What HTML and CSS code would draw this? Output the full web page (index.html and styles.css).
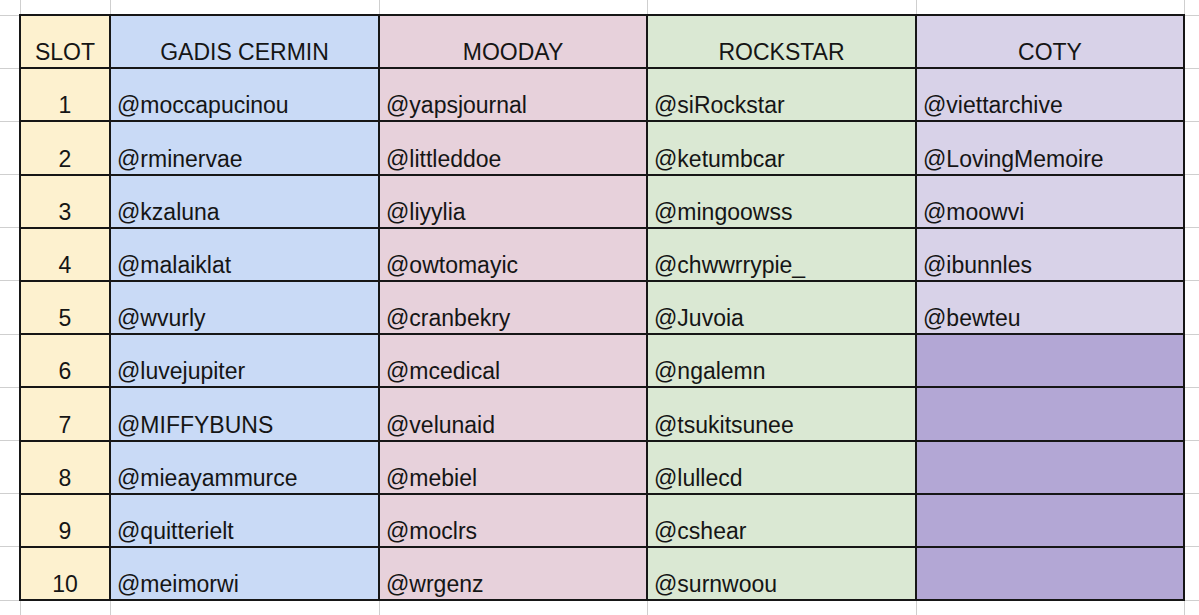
FILE: index.html
```html
<!DOCTYPE html>
<html lang="id">
<head>
<meta charset="utf-8">
<title>Slot</title>
<link rel="stylesheet" href="styles.css">
</head>
<body>
<table class="sheet">
  <colgroup>
    <col class="c-gut"><col class="c-slot"><col class="c-w1"><col class="c-w2"><col class="c-w3"><col class="c-w4"><col class="c-end">
  </colgroup>
  <tr class="r-edge"><td class="g"></td><td class="g"></td><td class="g"></td><td class="g"></td><td class="g"></td><td class="g"></td><td class="g"></td></tr>
  <tr class="r"><td class="g"></td><td class="d slot ctr">SLOT</td><td class="d blue ctr">GADIS CERMIN</td><td class="d pink ctr">MOODAY</td><td class="d green ctr">ROCKSTAR</td><td class="d lav ctr">COTY</td><td class="g"></td></tr>
  <tr class="r"><td class="g"></td><td class="d slot ctr">1</td><td class="d blue">@moccapucinou</td><td class="d pink">@yapsjournal</td><td class="d green">@siRockstar</td><td class="d lav">@viettarchive</td><td class="g"></td></tr>
  <tr class="r"><td class="g"></td><td class="d slot ctr">2</td><td class="d blue">@rminervae</td><td class="d pink">@littleddoe</td><td class="d green">@ketumbcar</td><td class="d lav">@LovingMemoire</td><td class="g"></td></tr>
  <tr class="r"><td class="g"></td><td class="d slot ctr">3</td><td class="d blue">@kzaluna</td><td class="d pink">@liyylia</td><td class="d green">@mingoowss</td><td class="d lav">@moowvi</td><td class="g"></td></tr>
  <tr class="r"><td class="g"></td><td class="d slot ctr">4</td><td class="d blue">@malaiklat</td><td class="d pink">@owtomayic</td><td class="d green">@chwwrrypie_</td><td class="d lav">@ibunnles</td><td class="g"></td></tr>
  <tr class="r"><td class="g"></td><td class="d slot ctr">5</td><td class="d blue">@wvurly</td><td class="d pink">@cranbekry</td><td class="d green">@Juvoia</td><td class="d lav">@bewteu</td><td class="g"></td></tr>
  <tr class="r"><td class="g"></td><td class="d slot ctr">6</td><td class="d blue">@luvejupiter</td><td class="d pink">@mcedical</td><td class="d green">@ngalemn</td><td class="d purple"></td><td class="g"></td></tr>
  <tr class="r"><td class="g"></td><td class="d slot ctr">7</td><td class="d blue">@MIFFYBUNS</td><td class="d pink">@velunaid</td><td class="d green">@tsukitsunee</td><td class="d purple"></td><td class="g"></td></tr>
  <tr class="r"><td class="g"></td><td class="d slot ctr">8</td><td class="d blue">@mieayammurce</td><td class="d pink">@mebiel</td><td class="d green">@lullecd</td><td class="d purple"></td><td class="g"></td></tr>
  <tr class="r"><td class="g"></td><td class="d slot ctr">9</td><td class="d blue">@quitterielt</td><td class="d pink">@moclrs</td><td class="d green">@cshear</td><td class="d purple"></td><td class="g"></td></tr>
  <tr class="r"><td class="g"></td><td class="d slot ctr">10</td><td class="d blue">@meimorwi</td><td class="d pink">@wrgenz</td><td class="d green">@surnwoou</td><td class="d purple"></td><td class="g"></td></tr>
  <tr class="r-edge"><td class="g"></td><td class="g"></td><td class="g"></td><td class="g"></td><td class="g"></td><td class="g"></td><td class="g"></td></tr>
</table>
</body>
</html>
```

FILE: styles.css
```css
html, body {
  margin: 0;
  padding: 0;
  background: #ffffff;
  overflow: hidden;
}

.sheet {
  border-collapse: collapse;
  table-layout: fixed;
  width: 1199px;
  font-family: "Liberation Sans", Arial, sans-serif;
  font-size: 23px;
  color: #151515;
}

.c-gut { width: 20px; }
.c-slot { width: 90px; }
.c-w1 { width: 269px; }
.c-w2 { width: 268px; }
.c-w3 { width: 269px; }
.c-w4 { width: 268px; }
.c-end { width: 15px; }

.r-edge { height: 15px; }
.r { height: 53.2px; }

td {
  padding: 0;
}

.g {
  border: 1px solid #cfcfcf;
}

.sheet tr:first-child .g { border-top: none; }
.sheet tr:last-child .g { border-bottom: none; }
.sheet tr .g:first-child { border-left: none; }
.sheet tr .g:last-child { border-right: none; }

.d {
  border: 2px solid #161616;
  vertical-align: bottom;
  padding: 0 6px 2px 6px;
  line-height: 26px;
  white-space: nowrap;
  overflow: hidden;
}

.ctr { text-align: center; }

.slot { background: #fdf1cf; }
.blue { background: #c9daf6; }
.pink { background: #e7d1db; }
.green { background: #dae8d3; }
.lav { background: #d8d2e8; }
.purple { background: #b3a7d5; }
```
